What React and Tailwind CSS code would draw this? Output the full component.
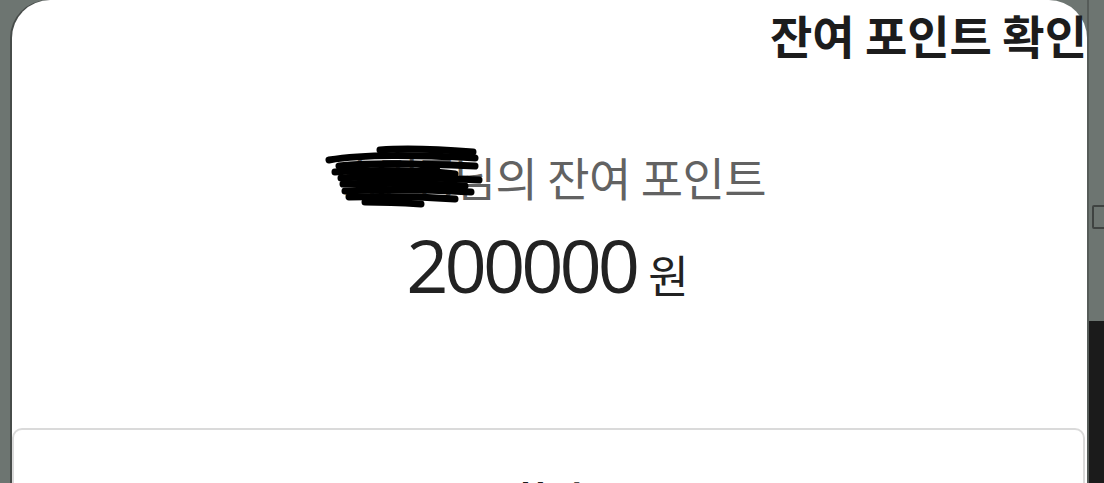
import React from 'react';

const KR = { fontFamily: '"Noto Sans CJK KR", "Noto Sans", sans-serif' };

// Hand-drawn pen scribble laid over the member name
function Scribble() {
  return (
    <svg
      className="absolute left-[-14px] top-[-4px]"
      width="160"
      height="66"
      viewBox="0 0 160 64"
      fill="none"
      stroke="#000"
      strokeLinecap="round"
      strokeWidth="7"
    >
      <path d="M55 6 C80 4 110 5 148 8" />
      <path d="M4 16 C40 10 90 11 150 14" />
      <path d="M14 22 C50 18 100 20 150 22" />
      <path d="M10 28 C50 25 110 27 130 30" />
      <path d="M16 34 C60 31 110 34 154 36" />
      <path d="M18 40 C60 38 100 40 140 42" />
      <path d="M20 47 C60 45 110 46 146 48" />
      <path d="M24 53 C60 52 100 53 130 55" />
      <path d="M40 58 C60 58 80 59 96 60" />
      <path d="M30 26 L120 44" strokeWidth="10" />
      <path d="M40 44 L110 24" strokeWidth="10" />
    </svg>
  );
}

export default function App() {
  return (
    <div className="relative flex h-[483px] w-[1104px] overflow-hidden bg-[#6d7571]">
      {/* sheet */}
      <div className="ml-[12px] flex h-[520px] w-[1075px] shrink-0 flex-col rounded-t-[38px] bg-white shadow-[-2px_0_0_#474c4a]">
        <div className="flex justify-end pt-[5px]" style={KR}>
          <h1 className="text-[46px] font-bold leading-[58px] text-[#1c1c1c]">
            잔여 포인트 확인
          </h1>
        </div>

        <div className="mt-[84px] flex flex-col items-center pr-[12px]" style={KR}>
          <p className="pl-[18px] text-[46px] leading-[58px] tracking-[-0.5px] text-[#626262]">
            <span className="relative inline-block tracking-[-4px]">
              홍길동
              <Scribble />
            </span>
            님의 잔여 포인트
          </p>
          <div className="mt-[20px] flex items-baseline gap-[12px] pl-[8px] text-[#222222]">
            <span
              className="text-[74px] leading-[80px] tracking-[-4px]"
              style={{ fontFamily: '"Open Sans", sans-serif' }}
            >
              200000
            </span>
            <span className="text-[44px] leading-[48px]">원</span>
          </div>
        </div>

        <div className="mr-[2px] mt-[123px] flex flex-1 justify-center rounded-t-[10px] border-2 border-[#dadada] pt-[44px]" style={KR}>
          <span className="text-[38px] font-bold leading-[48px] text-[#1c1c1c]">확인</span>
        </div>
      </div>

      {/* screen behind the sheet */}
      <div className="flex min-w-0 flex-1 flex-col overflow-hidden border-l-2 border-[#565c59]">
        <div className="flex h-[321px] flex-col pt-[205px]">
          <div className="ml-[3px] h-[24px] w-[20px] shrink-0 rounded-[2px] border-2 border-[#3f4341]" />
        </div>
        <div className="flex-1 bg-[#1b1b1b]" />
      </div>
    </div>
  );
}
